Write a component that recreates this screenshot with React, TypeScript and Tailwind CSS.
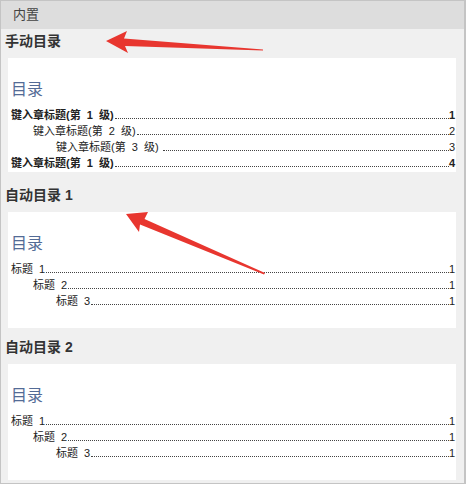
type Entry = { text: string; page: string; level: 1 | 2 | 3; bold?: boolean };

const manual: Entry[] = [
  { text: "键入章标题(第  1  级)", page: "1", level: 1, bold: true },
  { text: "键入章标题(第  2  级)", page: "2", level: 2 },
  { text: "键入章标题(第  3  级) ", page: "3", level: 3 },
  { text: "键入章标题(第  1  级)", page: "4", level: 1, bold: true },
];

const auto: Entry[] = [
  { text: "标题  1", page: "1", level: 1 },
  { text: "标题  2", page: "1", level: 2 },
  { text: "标题  3", page: "1", level: 3 },
];

const indent = { 1: "pl-0", 2: "pl-[22px]", 3: "pl-[45px]" };

function Row({ entry }: { entry: Entry }) {
  return (
    <div className={`flex h-[16px] items-end leading-[16px] ${indent[entry.level]} ${entry.bold ? "font-bold" : ""}`}>
      <span className="whitespace-pre">{entry.text}</span>
      <span className="mb-[4px] ml-[1px] flex-1 border-b border-dotted border-[#444]" />
      <span>{entry.page}</span>
    </div>
  );
}

function Heading({ label, height }: { label: string; height: string }) {
  return (
    <div className={`flex items-end pb-[9px] pl-[4px] ${height}`}>
      <span className="text-[14px] font-bold leading-[16px] text-[#333]">{label}</span>
    </div>
  );
}

function Panel({ entries, height }: { entries: Entry[]; height: string }) {
  return (
    <div className={`ml-[7px] mr-[8px] bg-white pl-[3px] pr-[1px] pt-[22px] ${height}`}>
      <div className="text-[16px] leading-[20px] text-[#536b96]">目录</div>
      <div className="mt-[7px] text-[11px] text-[#222]">
        {entries.map((e, i) => (
          <Row key={i} entry={e} />
        ))}
      </div>
    </div>
  );
}

export default function App() {
  return (
    <div className="relative h-[484px] w-[466px] overflow-hidden border-b border-l border-r-2 border-t border-[#c4c4c4] bg-[#f0f0f0] font-['Liberation_Sans','Noto_Sans_CJK_SC',sans-serif]">
      <div className="flex h-[28px] items-center bg-[#dddddd] pl-[12px] text-[13px] text-[#444]">内置</div>
      <Heading label="手动目录" height="h-[29px]" />
      <Panel entries={manual} height="h-[114px]" />
      <Heading label="自动目录 1" height="h-[40px]" />
      <Panel entries={auto} height="h-[116px]" />
      <Heading label="自动目录 2" height="h-[36px]" />
      <Panel entries={auto} height="h-[116px]" />

      {/* red annotation arrows */}
      <svg className="pointer-events-none absolute left-[-1px] top-[-1px]" width="466" height="484" viewBox="0 0 466 484">
        <polygon fill="#e8362f" points="106,41 127,31 124,38.5 263,49.5 263,50.5 125,46 128,53" />
        <polygon fill="#e8362f" points="126,214 148,212 144.5,219 265,273 264,274.5 140,224.5 139,232" />
      </svg>
    </div>
  );
}
